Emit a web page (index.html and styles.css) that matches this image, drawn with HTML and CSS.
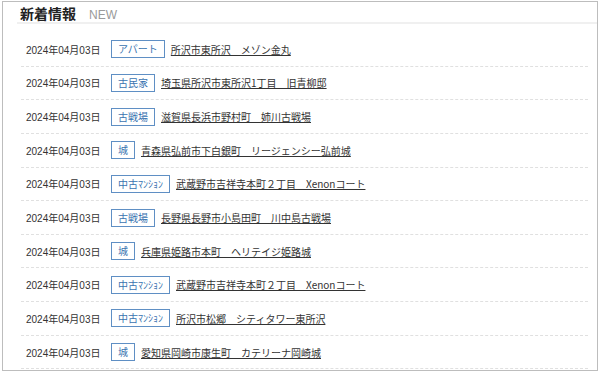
FILE: index.html
```html
<!DOCTYPE html>
<html lang="ja">
<head>
<meta charset="utf-8">
<link rel="stylesheet" href="styles.css">
</head>
<body>
<div class="frame">
  <div class="head">
    <h2 class="title">新着情報</h2>
    <span class="sub">NEW</span>
  </div>
  <ul class="news">
    <li class="row"><span class="date">2024年04月03日</span><span class="tag">アパート</span><a class="link" href="#">所沢市東所沢　メゾン金丸</a></li>
    <li class="row"><span class="date">2024年04月03日</span><span class="tag">古民家</span><a class="link" href="#">埼玉県所沢市東所沢1丁目　旧青柳邸</a></li>
    <li class="row"><span class="date">2024年04月03日</span><span class="tag">古戦場</span><a class="link" href="#">滋賀県長浜市野村町　姉川古戦場</a></li>
    <li class="row"><span class="date">2024年04月03日</span><span class="tag">城</span><a class="link" href="#">青森県弘前市下白銀町　リージェンシー弘前城</a></li>
    <li class="row"><span class="date">2024年04月03日</span><span class="tag">中古ﾏﾝｼｮﾝ</span><a class="link" href="#">武蔵野市吉祥寺本町２丁目　Xenonコート</a></li>
    <li class="row"><span class="date">2024年04月03日</span><span class="tag">古戦場</span><a class="link" href="#">長野県長野市小島田町　川中島古戦場</a></li>
    <li class="row"><span class="date">2024年04月03日</span><span class="tag">城</span><a class="link" href="#">兵庫県姫路市本町　ヘリテイジ姫路城</a></li>
    <li class="row"><span class="date">2024年04月03日</span><span class="tag">中古ﾏﾝｼｮﾝ</span><a class="link" href="#">武蔵野市吉祥寺本町２丁目　Xenonコート</a></li>
    <li class="row"><span class="date">2024年04月03日</span><span class="tag">中古ﾏﾝｼｮﾝ</span><a class="link" href="#">所沢市松郷　シティタワー東所沢</a></li>
    <li class="row"><span class="date">2024年04月03日</span><span class="tag">城</span><a class="link" href="#">愛知県岡崎市康生町　カテリーナ岡崎城</a></li>
  </ul>
</div>
</body>
</html>
```
FILE: styles.css
```css
* { box-sizing: border-box; }
html, body {
  margin: 0;
  padding: 0;
  background: #fff;
}
body {
  padding: 1px 2px 0 2px;
  font-family: "Liberation Sans", "Noto Sans CJK JP", sans-serif;
  color: #333;
}
.frame {
  width: 596px;
  height: 370px;
  border: 1px solid #bdbdbd;
  overflow: hidden;
}
.head {
  display: flex;
  align-items: baseline;
  gap: 13px;
  margin-left: 14px;
  padding-left: 3px;
  height: 22px;
  padding-top: 2px;
  border-bottom: 2px solid #f0f0f0;
}
.title {
  margin: 0;
  font-family: "Noto Sans CJK JP", sans-serif;
  font-size: 14px;
  line-height: 18px;
  font-weight: 700;
  color: #222;
}
.sub {
  font-size: 12px;
  color: #9a9a9a;
}
.news {
  list-style: none;
  margin: 9px 9px 0 18px;
  padding: 0;
}
.row {
  display: flex;
  align-items: center;
  height: 33.65px;
  padding-left: 5px;
  border-bottom: 1px dashed #e0e0e0;
  font-size: 10px;
}
.date {
  width: 85px;
  color: #333;
}
.tag {
  height: 18px;
  line-height: 16px;
  padding: 0 6px;
  border: 1px solid #5f8fc4;
  color: #3a73b0;
  font-family: "Noto Sans CJK JP", sans-serif;
  margin-right: 6px;
}
.link {
  color: #333;
  text-decoration: underline;
  font-family: "Noto Sans CJK JP", sans-serif;
}
```
